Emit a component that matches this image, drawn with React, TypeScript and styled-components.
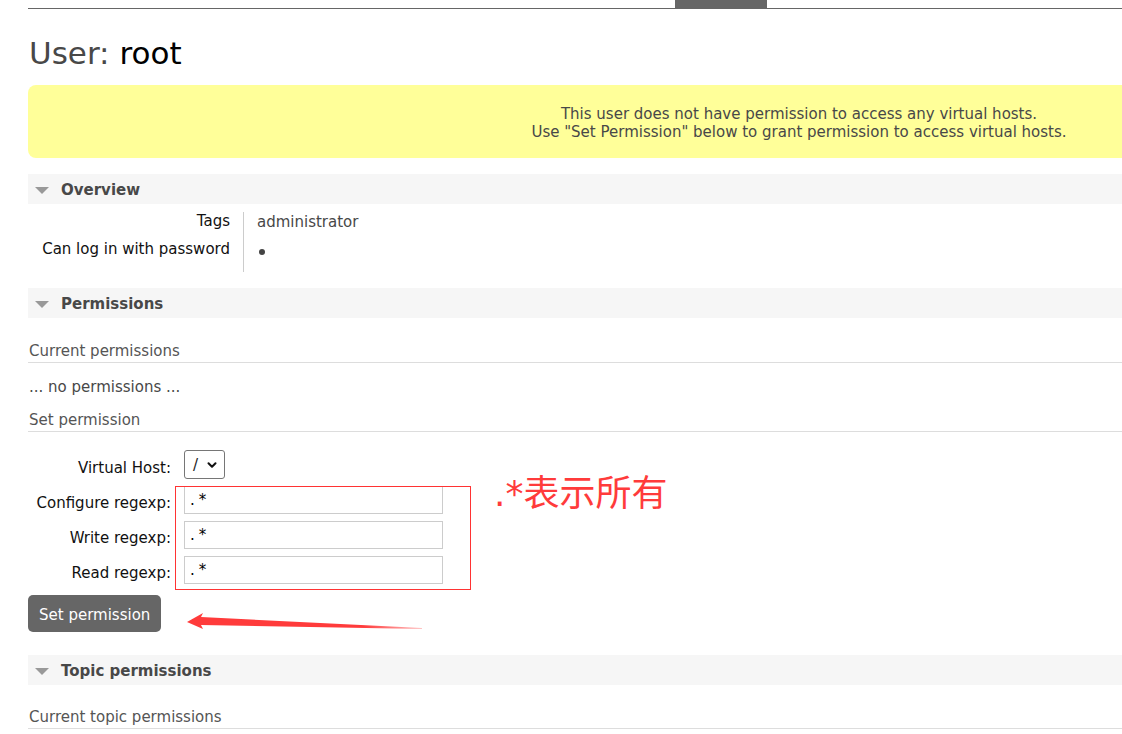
import React from "react";
import styled, { createGlobalStyle } from "styled-components";
import { ChevronDown } from "lucide-react";

const GlobalStyle = createGlobalStyle`
  html, body {
    margin: 0;
    padding: 0;
    overflow: hidden;
    background: #fff;
  }
  body {
    font-family: "DejaVu Sans", Verdana, sans-serif;
    font-size: 15px;
    color: #484848;
  }
`;

const Page = styled.div`
  width: 1542px;
  padding-left: 28px;
`;

const Nav = styled.div`
  height: 8px;
  border-bottom: 1px solid #666;
  display: flex;
`;

const NavTab = styled.div`
  margin-left: 647px;
  width: 92px;
  height: 8px;
  background: #666;
`;

const Title = styled.h1`
  margin: 26px 0 14px 1px;
  font-size: 31px;
  line-height: 36px;
  font-weight: normal;
  color: #484848;
  b {
    font-weight: normal;
    color: #000;
  }
`;

const Warning = styled.div`
  background: #ffff99;
  border-radius: 8px;
  padding: 20px 0 17px;
  text-align: center;
  line-height: 18px;
  color: #484848;
`;

const Section = styled.div<{ $gap: number }>`
  margin-top: ${(p) => p.$gap}px;
`;

const SectionHeader = styled.div`
  height: 30px;
  box-sizing: border-box;
  padding: 2px 0 0 7px;
  background: #f6f6f6;
  display: flex;
  align-items: center;
  gap: 12px;
  font-weight: bold;
  color: #484848;
`;

const Triangle = styled.span`
  width: 0;
  height: 0;
  border-left: 7px solid transparent;
  border-right: 7px solid transparent;
  border-top: 7px solid #999;
`;

const Facts = styled.div`
  margin-top: 8px;
  display: grid;
  grid-template-columns: 215px auto;
  grid-template-rows: 28px 32px;
  line-height: 18px;
`;

const FactLabel = styled.div`
  text-align: right;
  padding-right: 13px;
  color: #111;
`;

const FactValue = styled.div`
  border-left: 1px solid #ccc;
  padding-left: 13px;
  padding-top: 1px;
`;

const Bullet = styled.span`
  display: inline-block;
  margin: 6px 0 0 2px;
  width: 6px;
  height: 6px;
  border-radius: 50%;
  background: #444;
`;

const SubHeading = styled.h3<{ $gap: number }>`
  margin: ${(p) => p.$gap}px 0 0;
  padding: 1px 0 2px 1px;
  font-size: 15px;
  line-height: 18px;
  font-weight: normal;
  color: #555;
  border-bottom: 1px solid #ddd;
`;

const Note = styled.p`
  margin: 15px 0 0 1px;
  line-height: 18px;
  color: #484848;
`;

const Form = styled.div`
  position: relative;
  margin-top: 18px;
`;

const FieldGrid = styled.div`
  display: grid;
  grid-template-columns: 143px 260px;
  column-gap: 13px;
  row-gap: 7px;
  align-items: center;
`;

const FieldLabel = styled.label`
  text-align: right;
  color: #111;
  padding-top: 6px;
`;

const SelectBox = styled.div`
  width: 41px;
  height: 29px;
  box-sizing: border-box;
  border: 1px solid #767676;
  border-radius: 3px;
  display: flex;
  align-items: center;
  gap: 7px;
  padding-left: 8px;
  color: #222;
`;

const TextInput = styled.input`
  width: 259px;
  height: 28px;
  box-sizing: border-box;
  border: 1px solid #ccc;
  padding: 0 5px;
  font-family: "DejaVu Sans", Verdana, sans-serif;
  font-size: 15px;
  letter-spacing: 4px;
  color: #000;
  outline: none;
`;

const Button = styled.button`
  margin-top: 11px;
  height: 37px;
  padding: 2px 11px 0;
  background: #666;
  color: #fff;
  border: none;
  border-radius: 5px;
  font-family: "DejaVu Sans", Verdana, sans-serif;
  font-size: 15px;
`;

const Highlight = styled.div`
  position: absolute;
  left: 147px;
  top: 36px;
  width: 296px;
  height: 104px;
  border: 1px solid #f33;
  box-sizing: border-box;
  pointer-events: none;
`;

const Annotation = styled.div`
  position: absolute;
  left: 466px;
  top: 24px;
  font-family: "DejaVu Sans", "Noto Sans CJK SC", sans-serif;
  font-size: 36px;
  line-height: 40px;
  color: #ff3b3b;
  white-space: nowrap;
`;

const Arrow = styled.svg`
  position: absolute;
  left: 159px;
  top: 162px;
`;

const regexps = ["Configure regexp:", "Write regexp:", "Read regexp:"];

export default function App() {
  return (
    <>
      <GlobalStyle />
      <Page>
        <Nav>
          <NavTab />
        </Nav>
        <Title>
          User: <b>root</b>
        </Title>
        <Warning>
          This user does not have permission to access any virtual hosts.
          <br />
          Use "Set Permission" below to grant permission to access virtual hosts.
        </Warning>

        <Section $gap={16}>
          <SectionHeader>
            <Triangle />
            Overview
          </SectionHeader>
          <Facts>
            <FactLabel>Tags</FactLabel>
            <FactValue>administrator</FactValue>
            <FactLabel>Can log in with password</FactLabel>
            <FactValue>
              <Bullet />
            </FactValue>
          </Facts>
        </Section>

        <Section $gap={16}>
          <SectionHeader>
            <Triangle />
            Permissions
          </SectionHeader>
          <SubHeading $gap={23}>Current permissions</SubHeading>
          <Note>... no permissions ...</Note>
          <SubHeading $gap={14}>Set permission</SubHeading>
          <Form>
            <FieldGrid>
              <FieldLabel>Virtual Host:</FieldLabel>
              <SelectBox>
                /
                <ChevronDown size={14} strokeWidth={3.5} color="#111" />
              </SelectBox>
              {regexps.map((label) => (
                <React.Fragment key={label}>
                  <FieldLabel>{label}</FieldLabel>
                  <TextInput defaultValue=".*" />
                </React.Fragment>
              ))}
            </FieldGrid>
            <Button>Set permission</Button>
            <Highlight />
            <Annotation>.*表示所有</Annotation>
            <Arrow width="240" height="22" viewBox="0 0 240 22">
              <defs>
                <linearGradient id="fade" x1="0" x2="1" y1="0" y2="0">
                  <stop offset="0" stopColor="#ff3b3b" />
                  <stop offset="0.75" stopColor="#ff3b3b" />
                  <stop offset="1" stopColor="#ff3b3b" stopOpacity="0.3" />
                </linearGradient>
              </defs>
              <polygon
                points="0,10 16,1 14,5 235,16 235,17 14,13 16,17"
                fill="url(#fade)"
              />
            </Arrow>
          </Form>
        </Section>

        <Section $gap={23}>
          <SectionHeader>
            <Triangle />
            Topic permissions
          </SectionHeader>
          <SubHeading $gap={22}>Current topic permissions</SubHeading>
        </Section>
      </Page>
    </>
  );
}
